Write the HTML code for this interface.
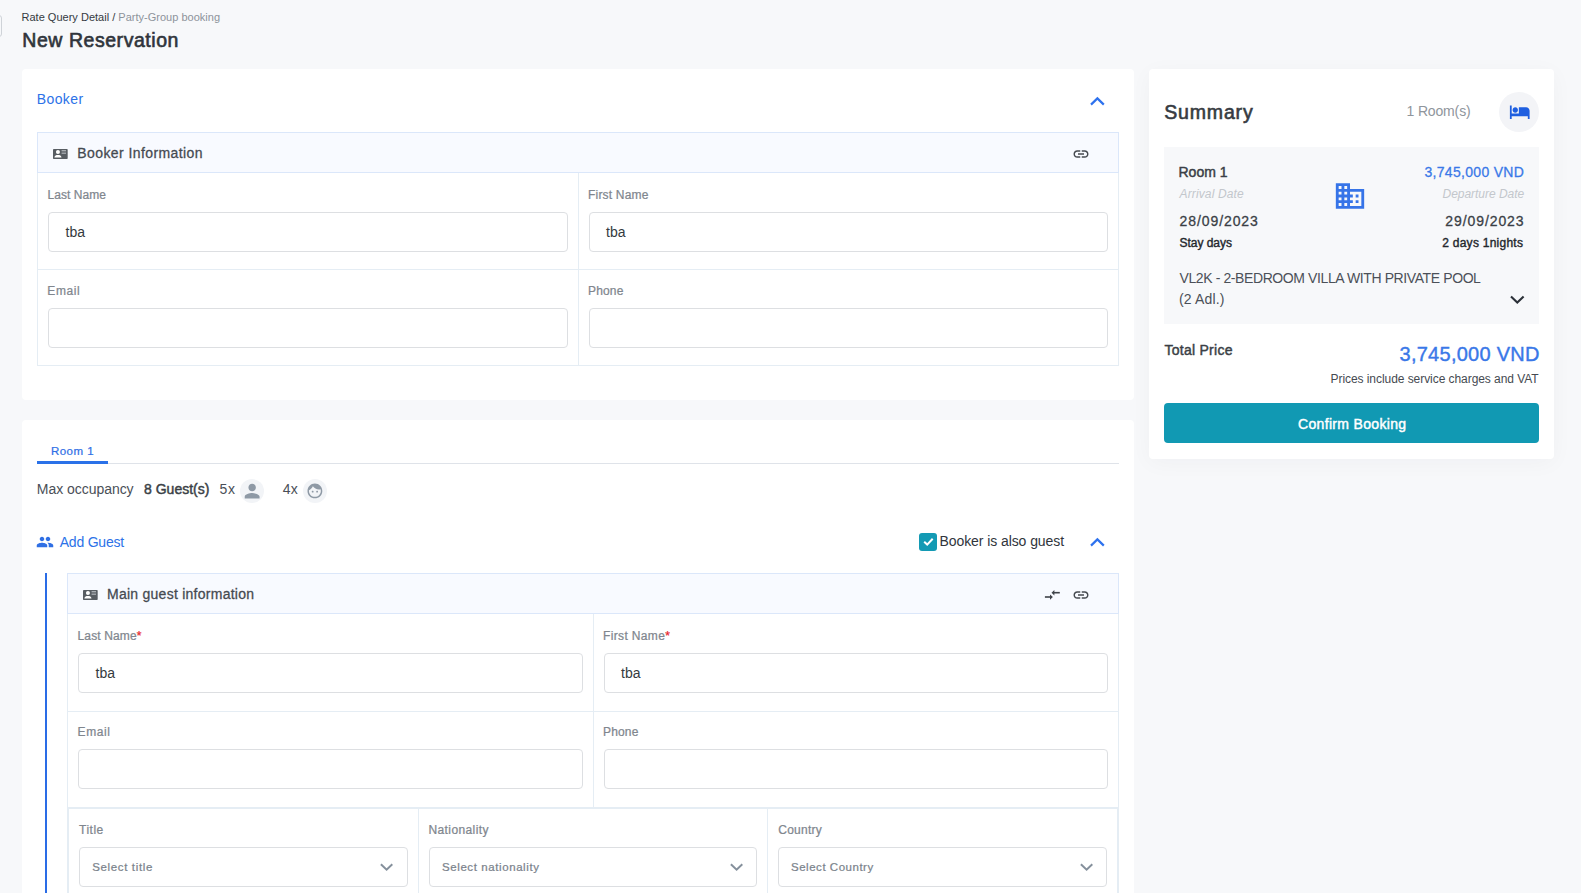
<!DOCTYPE html>
<html><head><meta charset="utf-8"><title>New Reservation</title>
<style>
html,body{margin:0;padding:0}
body{width:1581px;height:893px;overflow:hidden;position:relative;background:#f7f8fa;font-family:"Liberation Sans",sans-serif}
.a{position:absolute;box-sizing:border-box}
.t{position:absolute;white-space:pre;font-family:"Liberation Sans",sans-serif}
.card{position:absolute;background:#fff;border-radius:4px}
.hdr{position:absolute;box-sizing:border-box;background:#f8faff;border:1px solid #dbe7fa}
.bl{position:absolute;background:#e5edf4}
.inp{position:absolute;box-sizing:border-box;border:1px solid #dddfe2;border-radius:4px;background:#fff}
svg{position:absolute;overflow:visible}
</style></head><body>
<!-- left offscreen button edge -->
<div class="a" style="left:-20px;top:15px;width:22px;height:22px;border:1px solid #cfd3d8;border-radius:3px"></div>

<!-- Booker card -->
<div class="card" style="left:22px;top:69px;width:1112px;height:331px"></div>
<svg style="left:1090px;top:96.7px" width="15" height="10" viewBox="0 0 15 10"><polyline points="1,7.6 7.4,1.4 13.8,7.6" fill="none" stroke="#2e72ee" stroke-width="2.2"/></svg>
<div class="hdr" style="left:37px;top:132px;width:1082px;height:41px"></div>
<!-- grid lines booker -->
<div class="bl" style="left:37px;top:173px;width:1px;height:193px"></div>
<div class="bl" style="left:1118px;top:173px;width:1px;height:193px"></div>
<div class="bl" style="left:578px;top:173px;width:1px;height:193px"></div>
<div class="bl" style="left:37px;top:269px;width:1082px;height:1px"></div>
<div class="bl" style="left:37px;top:365px;width:1082px;height:1px"></div>
<div class="inp" style="left:48px;top:212px;width:520px;height:40px"></div>
<div class="inp" style="left:589px;top:212px;width:519px;height:40px"></div>
<div class="inp" style="left:48px;top:308px;width:520px;height:40px"></div>
<div class="inp" style="left:589px;top:308px;width:519px;height:40px"></div>

<!-- Summary card -->
<div class="card" style="left:1149px;top:69px;width:405px;height:390px;box-shadow:0 4px 22px rgba(30,40,60,0.035)"></div>
<div class="a" style="left:1499px;top:92px;width:40px;height:40px;border-radius:50%;background:#f3f4f7"></div>
<div class="a" style="left:1164px;top:147px;width:375px;height:177px;background:#f7f8fa"></div>
<div class="a" style="left:1164px;top:403px;width:375px;height:40px;border-radius:4px;background:#1199b3"></div>
<svg style="left:1504px;top:288px" width="26" height="22" viewBox="0 0 26 22"><polyline points="7,8.5 13.3,14.6 19.6,8.5" fill="none" stroke="#2b3038" stroke-width="2.1"/></svg>

<!-- Room card -->
<div class="card" style="left:22px;top:420px;width:1112px;height:500px"></div>
<div class="a" style="left:37px;top:463px;width:1082px;height:1px;background:#dfe3e9"></div>
<div class="a" style="left:37px;top:461px;width:71px;height:3px;background:#2a71e8"></div>
<div class="a" style="left:240px;top:479px;width:24px;height:24px;border-radius:50%;background:#f2f4f7"></div>
<div class="a" style="left:303px;top:479px;width:24px;height:24px;border-radius:50%;background:#f2f4f7"></div>
<div class="a" style="left:919px;top:533px;width:18px;height:18px;border-radius:3px;background:#139ab4"></div>
<svg style="left:919px;top:533px" width="18" height="18" viewBox="0 0 18 18"><polyline points="5.2,8.8 8.2,11.6 13.7,5.7" fill="none" stroke="#fff" stroke-width="2"/></svg>
<svg style="left:1090px;top:537.8px" width="15" height="10" viewBox="0 0 15 10"><polyline points="1,7.6 7.4,1.4 13.8,7.6" fill="none" stroke="#2e72ee" stroke-width="2.2"/></svg>
<div class="a" style="left:45px;top:573px;width:2px;height:330px;background:#2a6ce6"></div>
<div class="hdr" style="left:67px;top:573px;width:1052px;height:41px"></div>
<div class="bl" style="left:67px;top:614px;width:1px;height:290px"></div>
<div class="bl" style="left:1118px;top:614px;width:1px;height:290px"></div>
<div class="bl" style="left:593px;top:614px;width:1px;height:194px"></div>
<div class="bl" style="left:67px;top:711px;width:1052px;height:1px"></div>
<div class="bl" style="left:67px;top:807px;width:1052px;height:2px"></div>
<div class="bl" style="left:68px;top:808px;width:1px;height:100px"></div>
<div class="bl" style="left:1117px;top:808px;width:1px;height:100px"></div>
<div class="bl" style="left:418px;top:809px;width:1px;height:100px"></div>
<div class="bl" style="left:767px;top:809px;width:1px;height:100px"></div>
<div class="inp" style="left:78px;top:653px;width:505px;height:40px"></div>
<div class="inp" style="left:604px;top:653px;width:504px;height:40px"></div>
<div class="inp" style="left:78px;top:749px;width:505px;height:40px"></div>
<div class="inp" style="left:604px;top:749px;width:504px;height:40px"></div>
<div class="inp" style="left:79px;top:847px;width:329px;height:40px"></div>
<div class="inp" style="left:429px;top:847px;width:328px;height:40px"></div>
<div class="inp" style="left:778px;top:847px;width:329px;height:40px"></div>

<svg style="left:53px;top:149px" width="14.7" height="10" viewBox="0 0 14.7 10"><rect x="0" y="0" width="14.7" height="9.9" rx="0.7" fill="#585d63"/><circle cx="4.95" cy="3.1" r="2.0" fill="#fff"/><path d="M1.4 8.5C1.6 6.7 3.1 6.1 4.95 6.1S8.3 6.7 8.5 8.5Z" fill="#fff"/><rect x="8.6" y="1.0" width="4.4" height="1.35" fill="#a9aeb3"/><rect x="8.6" y="3.55" width="4.4" height="1.3" fill="#a9aeb3"/></svg>
<svg style="left:83px;top:590px" width="14.7" height="10" viewBox="0 0 14.7 10"><rect x="0" y="0" width="14.7" height="9.9" rx="0.7" fill="#585d63"/><circle cx="4.95" cy="3.1" r="2.0" fill="#fff"/><path d="M1.4 8.5C1.6 6.7 3.1 6.1 4.95 6.1S8.3 6.7 8.5 8.5Z" fill="#fff"/><rect x="8.6" y="1.0" width="4.4" height="1.35" fill="#a9aeb3"/><rect x="8.6" y="3.55" width="4.4" height="1.3" fill="#a9aeb3"/></svg>
<svg style="left:1071.7px;top:144.5px" width="18" height="18" viewBox="0 0 24 24"><path fill="#464a50" d="M3.9 12c0-1.71 1.39-3.1 3.1-3.1h4V7H7c-2.76 0-5 2.24-5 5s2.24 5 5 5h4v-1.9H7c-1.71 0-3.1-1.39-3.1-3.1zM8 13h8v-2H8v2zm9-6h-4v1.9h4c1.71 0 3.1 1.39 3.1 3.1s-1.39 3.1-3.1 3.1h-4V17h4c2.76 0 5-2.24 5-5s-2.24-5-5-5z"/></svg>
<svg style="left:1072.4px;top:585.8px" width="18" height="18" viewBox="0 0 24 24"><path fill="#464a50" d="M3.9 12c0-1.71 1.39-3.1 3.1-3.1h4V7H7c-2.76 0-5 2.24-5 5s2.24 5 5 5h4v-1.9H7c-1.71 0-3.1-1.39-3.1-3.1zM8 13h8v-2H8v2zm9-6h-4v1.9h4c1.71 0 3.1 1.39 3.1 3.1s-1.39 3.1-3.1 3.1h-4V17h4c2.76 0 5-2.24 5-5s-2.24-5-5-5z"/></svg>
<svg style="left:1040px;top:583px" width="22" height="20" viewBox="0 0 22 20" fill="#3f4349"><rect x="4.9" y="13.2" width="5.8" height="1.6"/><path d="M10.0 11.4L12.9 14.0L10.0 16.7Z"/><rect x="13.0" y="8.9" width="6.8" height="1.6"/><path d="M14.4 7.0L11.5 9.7L14.4 12.4Z"/></svg>
<svg style="left:1509.3px;top:100.8px" width="21.5" height="21.5" viewBox="0 0 24 24"><path fill="#1f5fe0" d="M7 13c1.66 0 3-1.34 3-3S8.66 7 7 7s-3 1.34-3 3 1.34 3 3 3zm12-6h-8v7H3V5H1v15h2v-3h18v3h2v-9c0-2.21-1.79-4-4-4z"/></svg>
<svg style="left:1332.8px;top:179.0px" width="34" height="34" viewBox="0 0 24 24"><path fill="#3674e8" d="M12 7V3H2v18h20V7H12zM6 19H4v-2h2v2zm0-4H4v-2h2v2zm0-4H4V9h2v2zm0-4H4V5h2v2zm4 12H8v-2h2v2zm0-4H8v-2h2v2zm0-4H8V9h2v2zm0-4H8V5h2v2zm10 12h-8v-2h2v-2h-2v-2h2v-2h-2V9h8v10zm-2-8h-2v2h2v-2zm0 4h-2v2h2v-2z"/></svg>
<svg style="left:36.2px;top:533.0px" width="18" height="18" viewBox="0 0 24 24"><path fill="#2f6fe4" d="M16 11c1.66 0 2.99-1.34 2.99-3S17.66 5 16 5c-1.66 0-3 1.34-3 3s1.34 3 3 3zm-8 0c1.66 0 2.99-1.34 2.99-3S9.66 5 8 5C6.34 5 5 6.34 5 8s1.34 3 3 3zm0 2c-2.33 0-7 1.17-7 3.5V19h14v-2.5c0-2.33-4.67-3.5-7-3.5zm8 0c-.29 0-.62.02-.97.05 1.16.84 1.97 1.97 1.97 3.45V19h6v-2.5c0-2.33-4.67-3.5-7-3.5z"/></svg>
<svg style="left:241.4px;top:480.1px" width="22.3" height="22.3" viewBox="0 0 24 24"><path fill="#8e99a5" d="M12 12c2.21 0 4-1.79 4-4s-1.79-4-4-4-4 1.79-4 4 1.79 4 4 4zm0 2c-2.67 0-8 1.34-8 4v2h16v-2c0-2.66-5.33-4-8-4z"/></svg>
<svg style="left:306.4px;top:482.3px" width="17.8" height="17.8" viewBox="0 0 24 24"><path fill="#8e99a5" d="M9 11.75c-.69 0-1.25.56-1.25 1.25s.56 1.25 1.25 1.25 1.25-.56 1.25-1.25-.56-1.25-1.25-1.25zm6 0c-.69 0-1.25.56-1.25 1.25s.56 1.25 1.25 1.25 1.25-.56 1.25-1.25-.56-1.25-1.25-1.25zM12 2C6.48 2 2 6.48 2 12s4.48 10 10 10 10-4.48 10-10S17.52 2 12 2zm0 18c-4.41 0-8-3.59-8-8 0-.29.02-.58.05-.86 2.36-1.05 4.23-2.98 5.21-5.37C11.07 8.33 14.05 10 17.42 10c.78 0 1.53-.09 2.25-.26.21.71.33 1.47.33 2.26 0 4.41-3.59 8-8 8z"/></svg>
<svg style="left:379.7px;top:863.3px" width="14" height="9" viewBox="0 0 14 9"><polyline points="0.9,1.2 6.6,6.7 12.3,1.2" fill="none" stroke="#85909c" stroke-width="2"/></svg>
<svg style="left:730.4px;top:863.3px" width="14" height="9" viewBox="0 0 14 9"><polyline points="0.9,1.2 6.6,6.7 12.3,1.2" fill="none" stroke="#85909c" stroke-width="2"/></svg>
<svg style="left:1079.7px;top:863.3px" width="14" height="9" viewBox="0 0 14 9"><polyline points="0.9,1.2 6.6,6.7 12.3,1.2" fill="none" stroke="#85909c" stroke-width="2"/></svg>
<div class="t" style="left:21.50px;top:12.00px;font-size:11px;line-height:11px;color:#353a41;letter-spacing:0.011px;">Rate Query Detail / <span style="color:#8d939b">Party-Group booking</span></div>
<div class="t" style="left:22.25px;top:31.00px;font-size:19.5px;line-height:19.5px;color:#2f343b;-webkit-text-stroke:0.62px;letter-spacing:0.550px;">New Reservation</div>
<div class="t" style="left:36.75px;top:92.00px;font-size:14px;line-height:14px;color:#2c72e8;letter-spacing:0.400px;">Booker</div>
<div class="t" style="left:77.25px;top:146.00px;font-size:14px;line-height:14px;color:#454a51;-webkit-text-stroke:0.28px;letter-spacing:0.412px;">Booker Information</div>
<div class="t" style="left:47.50px;top:189.00px;font-size:12px;line-height:12px;color:#80868e;-webkit-text-stroke:0.24px;letter-spacing:0.062px;">Last Name</div>
<div class="t" style="left:588.00px;top:189.00px;font-size:12px;line-height:12px;color:#80868e;-webkit-text-stroke:0.24px;letter-spacing:0.200px;">First Name</div>
<div class="t" style="left:65.50px;top:225.00px;font-size:14px;line-height:14px;color:#343a40;">tba</div>
<div class="t" style="left:606.00px;top:225.00px;font-size:14px;line-height:14px;color:#343a40;">tba</div>
<div class="t" style="left:47.25px;top:285.00px;font-size:12px;line-height:12px;color:#80868e;-webkit-text-stroke:0.24px;letter-spacing:0.625px;">Email</div>
<div class="t" style="left:588.00px;top:285.00px;font-size:12px;line-height:12px;color:#80868e;-webkit-text-stroke:0.24px;letter-spacing:0.150px;">Phone</div>
<div class="t" style="left:1164.25px;top:103.00px;font-size:19.5px;line-height:19.5px;color:#363b42;-webkit-text-stroke:0.62px;letter-spacing:0.833px;">Summary</div>
<div class="t" style="left:1406.50px;top:104.00px;font-size:14px;line-height:14px;color:#8f959c;letter-spacing:-0.150px;">1 Room(s)</div>
<div class="t" style="left:1178.50px;top:165.00px;font-size:14px;line-height:14px;color:#3a3f46;-webkit-text-stroke:0.45px;">Room 1</div>
<div class="t" style="left:1179.50px;top:188.00px;font-size:12px;line-height:12px;color:#c3c7cc;font-style:italic;letter-spacing:0.136px;">Arrival Date</div>
<div class="t" style="left:1424.50px;top:165.00px;font-size:14px;line-height:14px;color:#3a78e8;-webkit-text-stroke:0.28px;letter-spacing:0.300px;">3,745,000 VND</div>
<div class="t" style="left:1442.50px;top:188.00px;font-size:12px;line-height:12px;color:#c3c7cc;font-style:italic;letter-spacing:-0.031px;">Departure Date</div>
<div class="t" style="left:1179.50px;top:214.00px;font-size:14px;line-height:14px;color:#3a3f46;-webkit-text-stroke:0.28px;letter-spacing:0.922px;">28/09/2023</div>
<div class="t" style="left:1445.25px;top:214.00px;font-size:14px;line-height:14px;color:#3a3f46;-webkit-text-stroke:0.28px;letter-spacing:0.922px;">29/09/2023</div>
<div class="t" style="left:1179.50px;top:237.00px;font-size:12px;line-height:12px;color:#23272c;-webkit-text-stroke:0.38px;letter-spacing:-0.037px;">Stay days</div>
<div class="t" style="left:1442.25px;top:237.00px;font-size:12px;line-height:12px;color:#23272c;-webkit-text-stroke:0.38px;letter-spacing:0.254px;">2 days 1nights</div>
<div class="t" style="left:1179.50px;top:271.00px;font-size:14px;line-height:14px;color:#4b5058;letter-spacing:-0.397px;">VL2K - 2-BEDROOM VILLA WITH PRIVATE POOL</div>
<div class="t" style="left:1179.00px;top:292.00px;font-size:14px;line-height:14px;color:#4b5058;letter-spacing:0.143px;">(2 Adl.)</div>
<div class="t" style="left:1164.50px;top:343.00px;font-size:14px;line-height:14px;color:#3a3f46;-webkit-text-stroke:0.45px;letter-spacing:0.260px;">Total Price</div>
<div class="t" style="left:1399.50px;top:344.00px;font-size:20px;line-height:20px;color:#3a78e8;-webkit-text-stroke:0.40px;letter-spacing:0.267px;">3,745,000 VND</div>
<div class="t" style="left:1330.50px;top:373.00px;font-size:12px;line-height:12px;color:#454a51;letter-spacing:-0.059px;">Prices include service charges and VAT</div>
<div class="t" style="left:1298.00px;top:417.00px;font-size:14px;line-height:14px;color:#ffffff;-webkit-text-stroke:0.45px;letter-spacing:0.329px;">Confirm Booking</div>
<div class="t" style="left:51.00px;top:446.00px;font-size:11.5px;line-height:11.5px;color:#2f6fe6;-webkit-text-stroke:0.23px;letter-spacing:0.460px;">Room 1</div>
<div class="t" style="left:36.75px;top:482.00px;font-size:14px;line-height:14px;color:#4a4f57;letter-spacing:-0.033px;">Max occupancy</div>
<div class="t" style="left:144.00px;top:482.00px;font-size:14px;line-height:14px;color:#3a3f46;-webkit-text-stroke:0.45px;letter-spacing:0.011px;">8 Guest(s)</div>
<div class="t" style="left:219.50px;top:482.00px;font-size:14px;line-height:14px;color:#4a4f57;letter-spacing:0.600px;">5x</div>
<div class="t" style="left:282.75px;top:482.00px;font-size:14px;line-height:14px;color:#4a4f57;letter-spacing:0.200px;">4x</div>
<div class="t" style="left:59.75px;top:535.00px;font-size:14px;line-height:14px;color:#2c72e8;letter-spacing:-0.213px;">Add Guest</div>
<div class="t" style="left:939.50px;top:534.00px;font-size:14px;line-height:14px;color:#30353c;letter-spacing:-0.079px;">Booker is also guest</div>
<div class="t" style="left:107.00px;top:587.00px;font-size:14px;line-height:14px;color:#454a51;-webkit-text-stroke:0.28px;letter-spacing:0.257px;">Main guest information</div>
<div class="t" style="left:77.50px;top:630.00px;font-size:12px;line-height:12px;color:#80868e;-webkit-text-stroke:0.24px;letter-spacing:0.144px;">Last Name<span style="color:#e8262d">*</span></div>
<div class="t" style="left:603.00px;top:630.00px;font-size:12px;line-height:12px;color:#80868e;-webkit-text-stroke:0.24px;letter-spacing:0.350px;">First Name<span style="color:#e8262d">*</span></div>
<div class="t" style="left:95.50px;top:666.00px;font-size:14px;line-height:14px;color:#343a40;">tba</div>
<div class="t" style="left:621.00px;top:666.00px;font-size:14px;line-height:14px;color:#343a40;">tba</div>
<div class="t" style="left:77.50px;top:726.00px;font-size:12px;line-height:12px;color:#80868e;-webkit-text-stroke:0.24px;letter-spacing:0.625px;">Email</div>
<div class="t" style="left:603.00px;top:726.00px;font-size:12px;line-height:12px;color:#80868e;-webkit-text-stroke:0.24px;letter-spacing:0.150px;">Phone</div>
<div class="t" style="left:79.00px;top:824.00px;font-size:12px;line-height:12px;color:#80868e;-webkit-text-stroke:0.24px;letter-spacing:0.500px;">Title</div>
<div class="t" style="left:428.50px;top:824.00px;font-size:12px;line-height:12px;color:#80868e;-webkit-text-stroke:0.24px;letter-spacing:0.390px;">Nationality</div>
<div class="t" style="left:778.25px;top:824.00px;font-size:12px;line-height:12px;color:#80868e;-webkit-text-stroke:0.24px;letter-spacing:0.250px;">Country</div>
<div class="t" style="left:92.25px;top:862.00px;font-size:11.5px;line-height:11.5px;color:#7b838c;-webkit-text-stroke:0.23px;letter-spacing:0.636px;">Select title</div>
<div class="t" style="left:442.00px;top:862.00px;font-size:11.5px;line-height:11.5px;color:#7b838c;-webkit-text-stroke:0.23px;letter-spacing:0.588px;">Select nationality</div>
<div class="t" style="left:791.00px;top:862.00px;font-size:11.5px;line-height:11.5px;color:#7b838c;-webkit-text-stroke:0.23px;letter-spacing:0.523px;">Select Country</div>
</body></html>
